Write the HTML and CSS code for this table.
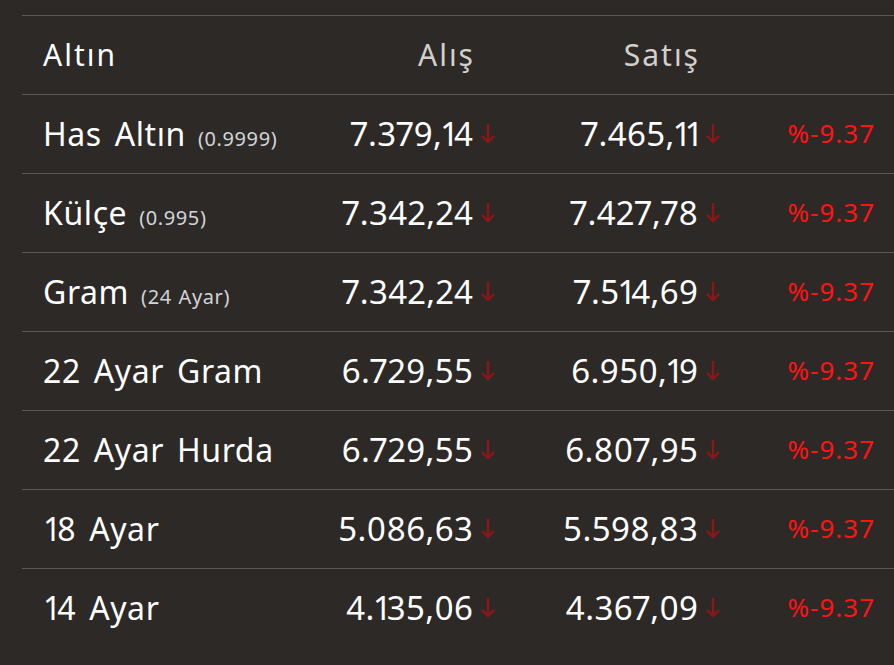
FILE: index.html
```html
<!DOCTYPE html>
<html lang="tr">
<head>
<meta charset="utf-8">
<title>Altın</title>
<link rel="stylesheet" href="styles.css">
</head>
<body>
<div class="table">
  <div class="row head">
    <div class="name">Altın</div>
    <div class="num hcol">Alış</div>
    <div class="arr"></div>
    <div class="num hcol">Satış</div>
    <div class="arr"></div>
    <div class="pct"></div>
  </div>
  <div class="row">
    <div class="name">Has Altın <small>(0.9999)</small></div>
    <div class="num">7.379,<span class="one">1</span>4</div>
    <div class="arr"><svg viewBox="0 0 16 24"><path d="M8 3V21M2 15L8 21L14 15"/></svg></div>
    <div class="num">7.465,<span class="one">1</span><span class="one">1</span></div>
    <div class="arr"><svg viewBox="0 0 16 24"><path d="M8 3V21M2 15L8 21L14 15"/></svg></div>
    <div class="pct">%-9.37</div>
  </div>
  <div class="row">
    <div class="name">Külçe <small>(0.995)</small></div>
    <div class="num">7.342,24</div>
    <div class="arr"><svg viewBox="0 0 16 24"><path d="M8 3V21M2 15L8 21L14 15"/></svg></div>
    <div class="num">7.427,78</div>
    <div class="arr"><svg viewBox="0 0 16 24"><path d="M8 3V21M2 15L8 21L14 15"/></svg></div>
    <div class="pct">%-9.37</div>
  </div>
  <div class="row">
    <div class="name">Gram <small>(24 Ayar)</small></div>
    <div class="num">7.342,24</div>
    <div class="arr"><svg viewBox="0 0 16 24"><path d="M8 3V21M2 15L8 21L14 15"/></svg></div>
    <div class="num">7.5<span class="one">1</span>4,69</div>
    <div class="arr"><svg viewBox="0 0 16 24"><path d="M8 3V21M2 15L8 21L14 15"/></svg></div>
    <div class="pct">%-9.37</div>
  </div>
  <div class="row">
    <div class="name">22 Ayar Gram</div>
    <div class="num">6.729,55</div>
    <div class="arr"><svg viewBox="0 0 16 24"><path d="M8 3V21M2 15L8 21L14 15"/></svg></div>
    <div class="num">6.950,<span class="one">1</span>9</div>
    <div class="arr"><svg viewBox="0 0 16 24"><path d="M8 3V21M2 15L8 21L14 15"/></svg></div>
    <div class="pct">%-9.37</div>
  </div>
  <div class="row">
    <div class="name">22 Ayar Hurda</div>
    <div class="num">6.729,55</div>
    <div class="arr"><svg viewBox="0 0 16 24"><path d="M8 3V21M2 15L8 21L14 15"/></svg></div>
    <div class="num">6.807,95</div>
    <div class="arr"><svg viewBox="0 0 16 24"><path d="M8 3V21M2 15L8 21L14 15"/></svg></div>
    <div class="pct">%-9.37</div>
  </div>
  <div class="row">
    <div class="name"><span class="one">1</span>8 Ayar</div>
    <div class="num">5.086,63</div>
    <div class="arr"><svg viewBox="0 0 16 24"><path d="M8 3V21M2 15L8 21L14 15"/></svg></div>
    <div class="num">5.598,83</div>
    <div class="arr"><svg viewBox="0 0 16 24"><path d="M8 3V21M2 15L8 21L14 15"/></svg></div>
    <div class="pct">%-9.37</div>
  </div>
  <div class="row">
    <div class="name"><span class="one">1</span>4 Ayar</div>
    <div class="num">4.<span class="one">1</span>35,06</div>
    <div class="arr"><svg viewBox="0 0 16 24"><path d="M8 3V21M2 15L8 21L14 15"/></svg></div>
    <div class="num">4.367,09</div>
    <div class="arr"><svg viewBox="0 0 16 24"><path d="M8 3V21M2 15L8 21L14 15"/></svg></div>
    <div class="pct">%-9.37</div>
  </div>
</div>
</body>
</html>
```
FILE: styles.css
```css
html, body {
  margin: 0;
  padding: 0;
  background: #2c2926;
  height: 100%;
  overflow: hidden;
}
body {
  font-family: "Noto Sans", sans-serif;
  color: #ffffff;
}
.table {
  margin: 15px 0 0 22px;
}
.row {
  display: grid;
  grid-template-columns: 278px 173px 27px 198px 27px 149px;
  height: 76px;
  padding-bottom: 2px;
  border-top: 1px solid #5c5853;
  align-items: center;
  padding-right: 20px;
}
.name {
  padding-left: 21px;
  font-size: 32px;
  letter-spacing: 0.6px;
  word-spacing: 4px;
  white-space: nowrap;
}
.name .one {
  letter-spacing: -4px;
}
.name small {
  font-size: 20px;
  color: #d2d4d8;
  letter-spacing: 0.6px;
  word-spacing: 1px;
  margin-left: -1px;
}
.num {
  text-align: right;
  font-size: 33px;
  font-variant-numeric: proportional-nums;
  letter-spacing: 0.4px;
  margin-right: -0.4px;
}
.num .one {
  letter-spacing: -2.8px;
}
.head .name {
  font-size: 30px;
  letter-spacing: 2px;
}
.head .hcol {
  color: #d3d0cb;
  font-size: 30px;
  letter-spacing: 2px;
  margin-right: -2px;
}
.arr {
  display: flex;
  align-items: center;
  padding-left: 7px;
}
.arr svg {
  width: 16px;
  height: 24px;
  fill: none;
  stroke: #8d1717;
  stroke-width: 2.4;
}
.pct {
  text-align: right;
  font-size: 26px;
  letter-spacing: 1px;
  margin-right: -1px;
  color: #ff1414;
}
```
